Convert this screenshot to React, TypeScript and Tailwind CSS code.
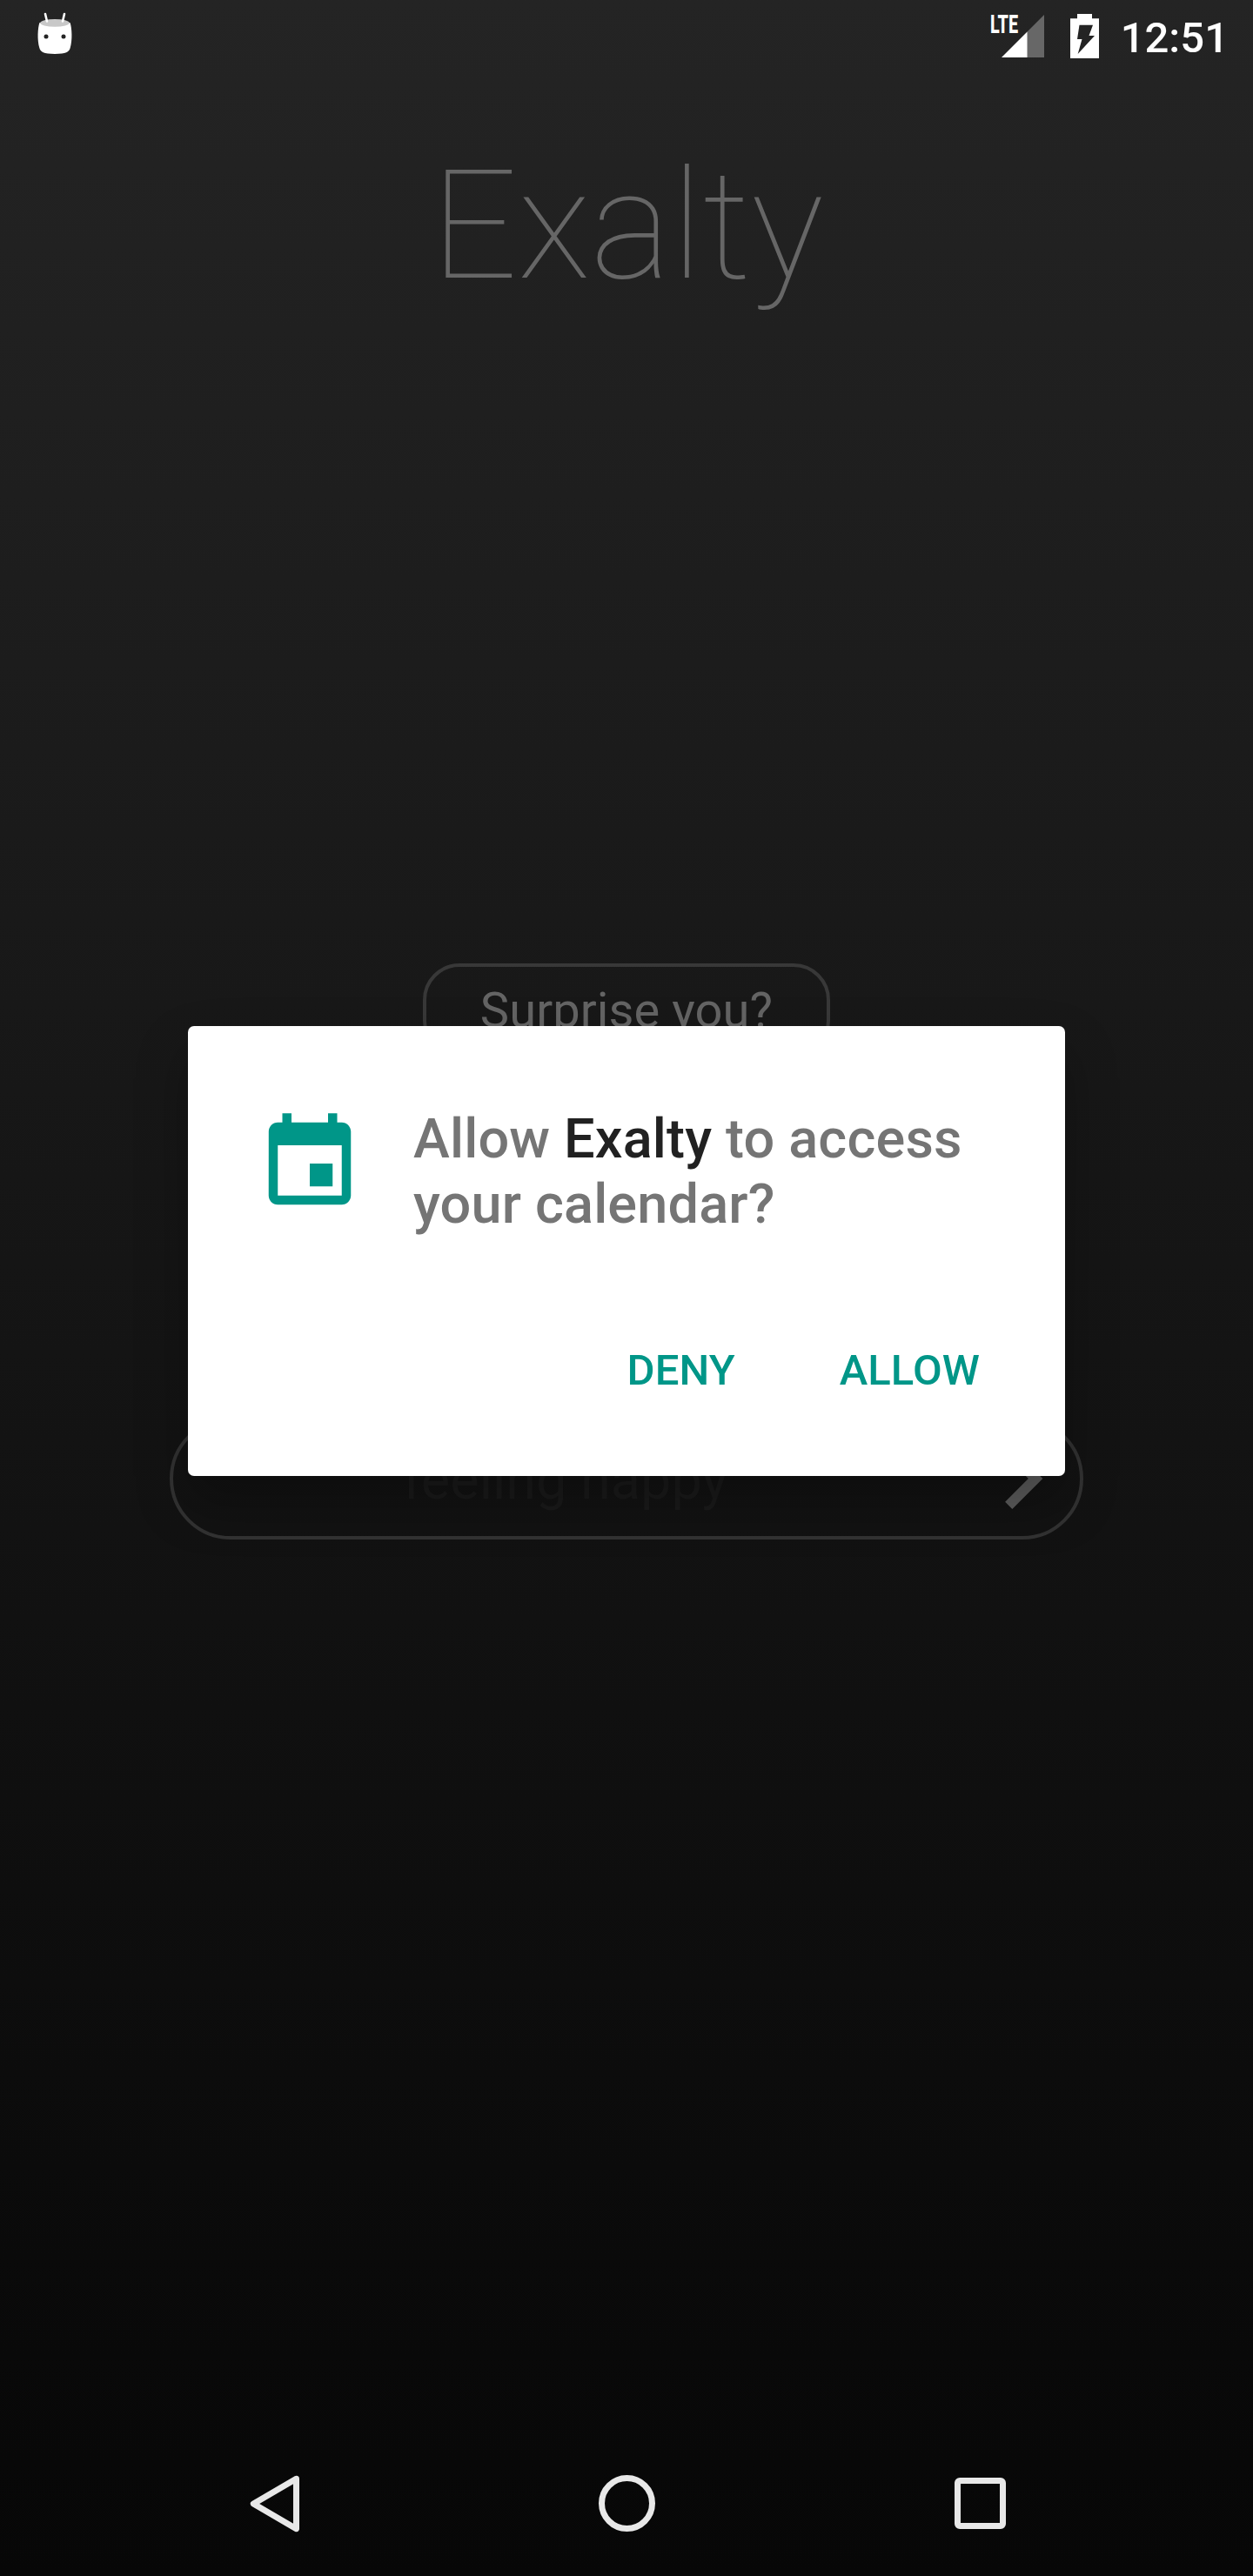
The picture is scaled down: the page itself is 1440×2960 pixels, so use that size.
import React from "react";

function RobotIcon() {
  return (
    <svg className="ml-[42px] mt-[14px] h-[50px] w-[42px]" viewBox="0 0 42 50">
      <path
        d="M3.500 12C1.300 18 .6 32 3.300 41C4.600 45.800 8 47.700 21 47.900C34 47.700 37.400 45.800 38.700 41C41.400 32 40.700 18 38.500 12Z"
        fill="#fff"
      />
      <ellipse cx="21" cy="12.300" rx="16.800" ry="4.400" fill="#c8c8c8" />
      <path d="M10 2l2 8.500M32 2l-2 8.500" stroke="#fff" strokeWidth="2.600" strokeLinecap="round" />
      <circle cx="11" cy="28" r="2.500" fill="#242424" />
      <circle cx="31" cy="28" r="2.500" fill="#242424" />
    </svg>
  );
}

function StatusBar() {
  return (
    <div className="flex h-[84px] items-start justify-between">
      <RobotIcon />
      <div className="flex items-start">
        <div className="h-[30px] w-[13px] pt-[13px]">
          <span className="block w-0 origin-left scale-x-[0.67] whitespace-nowrap text-[29.5px] font-extrabold leading-[30px] text-white">
            LTE
          </span>
        </div>
        <svg className="mt-[17px] h-[49px] w-[49px]" viewBox="0 0 49 49">
          <path d="M49 0V49H29V20Z" fill="#676767" />
          <path d="M29.500 19.500V49H0Z" fill="#fff" />
        </svg>
        <svg className="ml-[30px] mt-[16px] h-[51px] w-[33px]" viewBox="0 0 33 51">
          <path
            fillRule="evenodd"
            fill="#fff"
            d="M8 0H25V5.300H33V51H0V5.300H8ZM10.500 12.700L8 29H13.500L8.700 46L28 25H21.500L26 12.700Z"
          />
        </svg>
        <span className="ml-[25px] mr-[28px] mt-[19px] text-[49px] font-medium leading-[50px] text-white">
          12:51
        </span>
      </div>
    </div>
  );
}

function EventIcon() {
  return (
    <svg className="mt-[3px] size-[126px] shrink-0" viewBox="0 0 24 24" fill="#009688">
      <path d="M17 12h-5v5h5v-5zM16 1v2H8V1H6v2H5c-1.110 0-1.990.9-1.990 2L3 19c0 1.100.89 2 2 2h14c1.100 0 2-.9 2-2V5c0-1.100-.9-2-2-2h-1V1h-2zm3 18H5V8h14v11z" />
    </svg>
  );
}

function PermissionDialog() {
  return (
    <div className="h-[517px] w-[1008px] rounded-[7px] bg-white pt-[92px] shadow-[0_30px_60px_rgba(0,0,0,0.28)]">
      <div className="flex pl-[77px]">
        <EventIcon />
        <p className="ml-[56px] text-[63px] font-medium leading-[75px] tracking-[0.17px] text-[#757575]">
          Allow <span className="text-[#212121]">Exalty</span> to access
          <br />
          your calendar?
        </p>
      </div>
      <div className="mt-[129px] flex justify-end pr-[98px] text-[49px] font-medium leading-[50px] tracking-[0.1px] text-[#009688]">
        <button className="mr-[120px]">DENY</button>
        <button>ALLOW</button>
      </div>
    </div>
  );
}

function NavBar() {
  return (
    <div className="mt-auto flex h-[168px] items-center justify-center pt-px">
      <svg className="h-[70px] w-[405px]" viewBox="0 0 405 70" fill="none" stroke="#e8e8e8">
        <path d="M57.500 6.300L8.300 35L57.500 63.700Z" strokeWidth="7" strokeLinejoin="round" />
      </svg>
      <div className="size-[65px] rounded-full border-[7px] border-[#e8e8e8]" />
      <div className="flex w-[405px] justify-end pr-[2px]">
        <div className="size-[59px] rounded-[6px] border-[7px] border-[#e8e8e8]" />
      </div>
    </div>
  );
}

export default function App() {
  return (
    <div className="relative flex h-[2960px] w-[1440px] flex-col overflow-hidden bg-linear-to-b from-[#242424] to-[#070707] font-['Roboto',sans-serif]">
      <StatusBar />
      <h1 className="mt-[76px] pl-[2px] text-center text-[175px] font-thin leading-[200px] tracking-[0.15px] text-[#666666]">
        Exalty
      </h1>
      <div className="mt-[747px] flex h-[108px] w-[468px] items-center justify-center self-center rounded-[42px] border-4 border-[#383838] text-[56px] tracking-[0.1px] text-[#646464]">
        Surprise you?
      </div>
      <div className="mt-[414px] flex h-[140px] w-[1050px] items-center self-center rounded-[70px] border-4 border-[#323232]">
        <span className="mt-[5px] flex-1 pr-[5px] text-center text-[63px] text-[#1a1a1a]">feeling happy</span>
        <svg className="-mr-1 size-[140px] shrink-0" viewBox="0 0 24 24" fill="#5c5c5c">
          <path d="M10 6L8.590 7.410 13.170 12l-4.580 4.590L10 18l6-6z" />
        </svg>
      </div>
      <NavBar />
      <div className="absolute inset-0 flex items-start justify-center pt-[1179px]">
        <PermissionDialog />
      </div>
    </div>
  );
}
